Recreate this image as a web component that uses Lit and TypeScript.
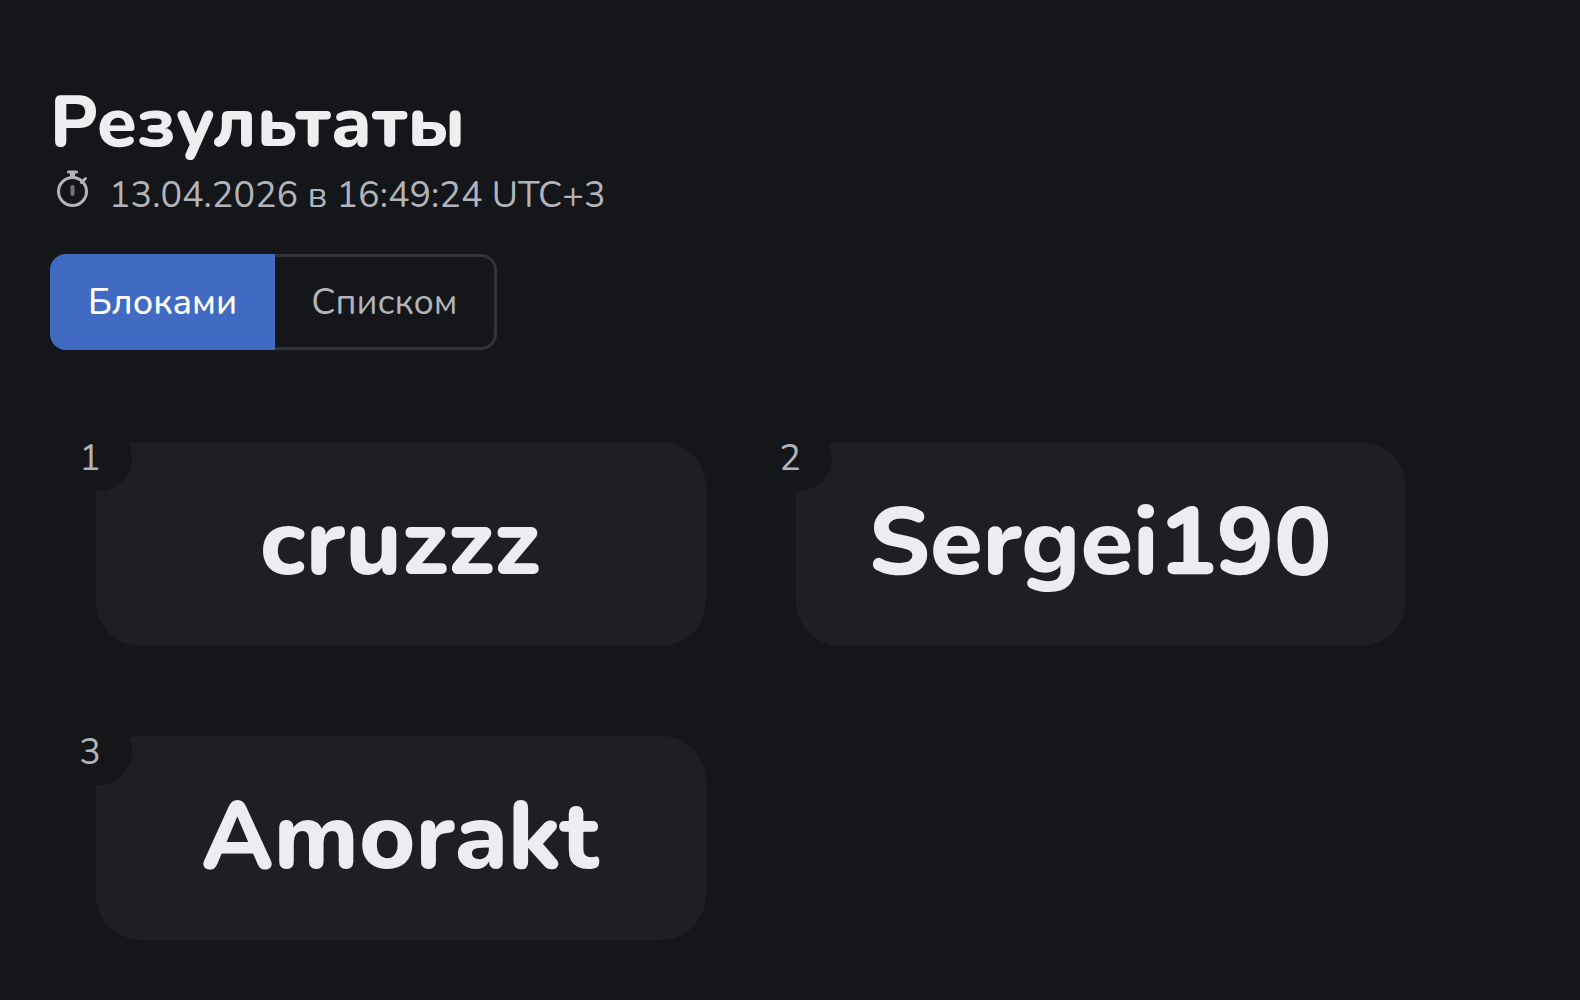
import { LitElement, html, css } from "lit";
import { customElement, property, state } from "lit/decorators.js";
import { classMap } from "lit/directives/class-map.js";

type View = "blocks" | "list";

@customElement("result-card")
export class ResultCard extends LitElement {
  @property({ type: Number }) place = 1;
  @property() name = "";

  static styles = css`
    :host {
      display: block;
    }
    .card {
      position: relative;
      box-sizing: border-box;
      min-height: 204px;
      padding: 0 26px 2px 24px;
      display: flex;
      align-items: center;
      justify-content: center;
      border-radius: 45px;
      background: #1e1f24;
    }
    .place {
      position: absolute;
      top: -18px;
      left: -48px;
      box-sizing: border-box;
      min-width: 84px;
      height: 67px;
      border-radius: 36px;
      background: #15161a;
      color: #b2b4bb;
      font-size: 36px;
      line-height: 69px;
      text-align: center;
    }
    .name {
      margin: 0;
      color: #ecedf0;
      font-size: 96px;
      line-height: 134px;
      font-weight: 800;
    }
  `;

  render() {
    return html`
      <div class="card">
        <span class="place">${this.place}</span>
        <h2 class="name">${this.name}</h2>
      </div>
    `;
  }
}

@customElement("app-root")
export class AppRoot extends LitElement {
  @state() private view: View = "blocks";

  private results = ["cruzzz", "Sergei190", "Amorakt"];

  static styles = css`
    :host {
      display: block;
      min-height: 100vh;
      box-sizing: border-box;
      padding: 82px 50px 60px;
      background: #15161a;
      color: #edeef0;
      font-family: Nunito, "Open Sans", sans-serif;
    }
    .title {
      margin: 0;
      font-size: 72px;
      line-height: 80px;
      font-weight: 800;
    }
    .date {
      display: flex;
      align-items: flex-start;
      gap: 15px;
      margin: 8px 0 32px;
      color: #b2b4bb;
      font-size: 36px;
      line-height: 52px;
    }
    .clock {
      width: 44px;
      height: 48px;
      flex: none;
    }
    .toggle {
      display: inline-flex;
      vertical-align: top;
    }
    .option {
      box-sizing: border-box;
      height: 96px;
      padding: 2px 35px 0;
      border: 3px solid #33343b;
      background: transparent;
      color: #b2b4bb;
      font: inherit;
      font-size: 36px;
      line-height: 48px;
      cursor: pointer;
    }
    .option:first-child {
      border-radius: 16px 0 0 16px;
    }
    .option:last-child {
      padding: 2px 36px 0;
      border-left: 0;
      border-radius: 0 16px 16px 0;
    }
    .option.active {
      border-color: #416ac2;
      background: #416ac2;
      color: #ffffff;
      font-weight: 500;
    }
    .results {
      display: grid;
      grid-template-columns: repeat(2, minmax(0, 610px));
      gap: 90px;
      margin: 92px 0 0;
      padding: 0 0 0 46px;
      list-style: none;
    }
    .results.list {
      grid-template-columns: minmax(0, 610px);
    }
  `;

  private option(view: View, label: string) {
    const active = this.view === view;
    return html`<button
      type="button"
      class=${classMap({ option: true, active })}
      aria-pressed=${active ? "true" : "false"}
      @click=${() => (this.view = view)}
    >${label}</button>`;
  }

  render() {
    return html`
      <header>
        <h1 class="title">Результаты</h1>
        <p class="date">
          <svg class="clock" viewBox="0 0 44 48" fill="none" stroke="currentColor" aria-hidden="true">
            <circle cx="22.5" cy="21.5" r="14" stroke-width="3" />
            <path d="M18.5 2h8" stroke-width="3" stroke-linecap="round" />
            <path d="M22.5 2v6" stroke-width="5" />
            <path d="M31.500 12.500l4-4" stroke-width="3" stroke-linecap="round" />
            <path d="M22.500 17v7" stroke-width="4" stroke-linecap="round" opacity="0.6" />
          </svg>
          <time datetime="2026-04-13T16:49:24+03:00">13.04.2026 в 16:49:24 UTC+3</time>
        </p>
        <div class="toggle" role="group">
          ${this.option("blocks", "Блоками")}${this.option("list", "Списком")}
        </div>
      </header>
      <ol class=${classMap({ results: true, list: this.view === "list" })}>
        ${this.results.map(
          (name, i) => html`<li><result-card .place=${i + 1} .name=${name}></result-card></li>`
        )}
      </ol>
    `;
  }
}
